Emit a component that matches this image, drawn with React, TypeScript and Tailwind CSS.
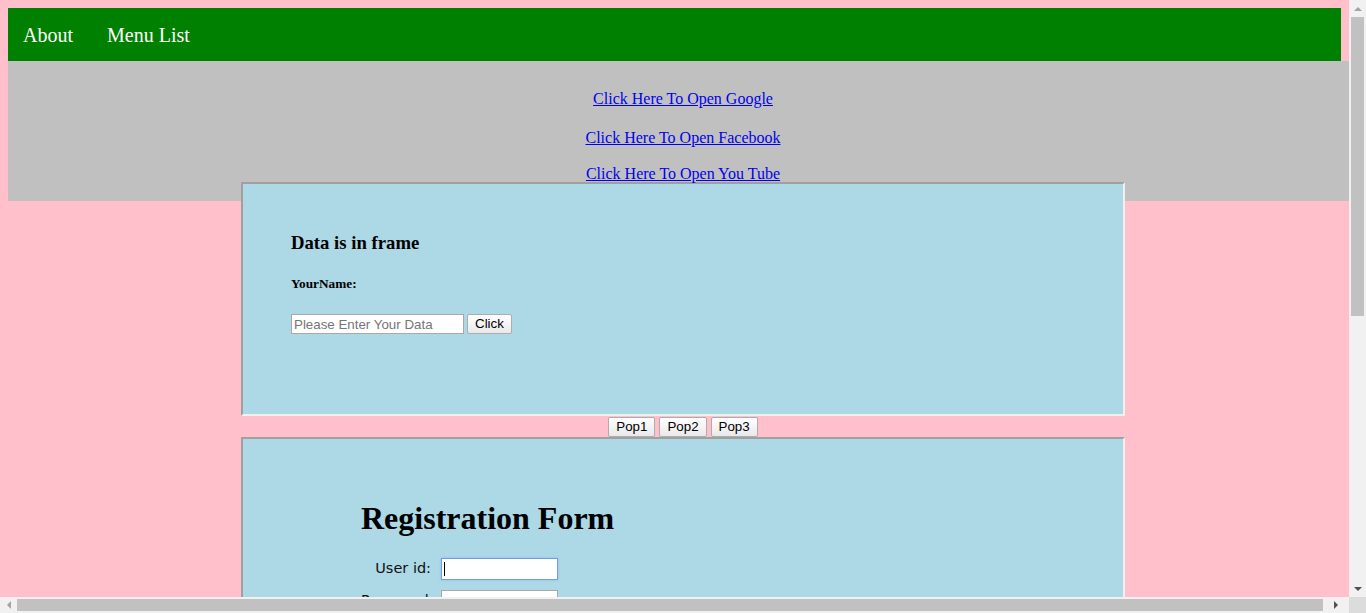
const serif = 'font-["Liberation_Serif",serif]'

const links = [
  { label: 'Click Here To Open Google', gap: 'mt-0 leading-[18px]' },
  { label: 'Click Here To Open Facebook', gap: 'mt-[21px] leading-[18px]' },
  { label: 'Click Here To Open You Tube', gap: 'mt-[19px] leading-[16px]' },
]

function OldButton({ label }: { label: string }) {
  return (
    <button className='h-[20px] px-[7px] border border-[#adadad] rounded-[2px] bg-linear-to-b from-white to-[#e9e9e9] text-[13.33px] leading-none text-black font-["Liberation_Sans",Arial,sans-serif]'>
      {label}
    </button>
  )
}

function Frame({ className, children }: { className: string; children: React.ReactNode }) {
  return (
    <div
      className={`mx-auto w-[884px] shrink-0 border-2 border-t-[#a0a0a0] border-l-[#a0a0a0] border-b-[#f0f0f0] border-r-[#f0f0f0] bg-[#add8e6] text-left ${className}`}
    >
      {children}
    </div>
  )
}

function Arrow({ dir, color }: { dir: 'up' | 'down' | 'left' | 'right'; color: string }) {
  const pts = {
    up: '0,4 4,0 8,4',
    down: '0,0 8,0 4,4',
    left: '4,0 4,8 0,4',
    right: '0,0 0,8 4,4',
  }[dir]
  const w = dir === 'up' || dir === 'down' ? 8 : 4
  const h = dir === 'up' || dir === 'down' ? 4 : 8
  return (
    <svg width={w} height={h} viewBox={`0 0 ${w} ${h}`}>
      <polygon points={pts} fill={color} />
    </svg>
  )
}

function Page() {
  return (
    <div className={`pt-[8px] pl-[8px] ${serif}`}>
      <nav className="w-[1333px] h-[53px] bg-[#008000] flex items-center gap-[4px] text-white text-[20px]">
        <a className="px-[15px]">About</a>
        <a className="px-[15px]">Menu List</a>
      </nav>
      <div className="w-[1350px] h-[140px] bg-[#c0c0c0] text-center pt-[29px]">
        {links.map((l) => (
          <div key={l.label} className={`${l.gap} text-[16px]`}>
            <a className="text-[#0000ee] underline">{l.label}</a>
          </div>
        ))}

        <Frame className="h-[234px] pt-[48px] pl-[48px]">
          <h3 className="text-[18.72px] font-bold leading-[22px]">Data is in frame</h3>
          <h5 className="mt-[22px] text-[13.28px] font-bold leading-[15px]">YourName:</h5>
          <div className="mt-[23px] flex gap-[3px]">
            <input
              placeholder="Please Enter Your Data"
              className='w-[173px] h-[20px] px-[2px] bg-white border border-[#a9a9a9] text-[13.33px] placeholder:text-[#757575] font-["Liberation_Sans",Arial,sans-serif] outline-none'
            />
            <OldButton label="Click" />
          </div>
        </Frame>

        <div className="flex justify-center gap-[4px] h-[21px] pt-[1px]">
          <OldButton label="Pop1" />
          <OldButton label="Pop2" />
          <OldButton label="Pop3" />
        </div>

        <Frame className="h-[320px] pt-[61px] pl-[118px]">
          <h1 className="text-[32px] font-bold leading-[37px]">Registration Form</h1>
          <div className='mt-[21px] flex flex-col gap-[10px] text-[14.5px] text-[#111] font-["DejaVu_Sans",Verdana,sans-serif]'>
            <div className="flex items-center">
              <label className="w-[70px] text-right">User id:</label>
              <div className="ml-[10px] w-[117px] h-[22px] bg-white border border-[#6fa0e6] shadow-[0_0_2px_#8fb8f0] flex items-center pl-[2px]">
                <span className="w-px h-[14px] bg-black" />
              </div>
            </div>
            <div className="flex items-center">
              <label className="w-[70px] text-right">Password:</label>
              <div className="ml-[10px] w-[117px] h-[22px] bg-white border border-[#a9a9a9]" />
            </div>
          </div>
        </Frame>
      </div>
    </div>
  )
}

export default function App() {
  return (
    <div className="w-[1366px] h-[613px] flex flex-col overflow-hidden bg-[#f1f1f1]">
      <div className="flex h-[597px]">
        <div className="w-[1349px] h-[597px] overflow-hidden bg-[#ffc0cb]">
          <Page />
        </div>
        <div className="w-[17px] h-[597px] bg-[#f1f1f1] flex flex-col items-center">
          <div className="h-[17px] flex items-center justify-center">
            <Arrow dir="up" color="#a3a3a3" />
          </div>
          <div className="w-[13px] h-[299px] bg-[#c1c1c1]" />
          <div className="flex-1" />
          <div className="h-[17px] flex items-center justify-center">
            <Arrow dir="down" color="#505050" />
          </div>
        </div>
      </div>
      <div className="flex h-[16px]">
        <div className="w-[1349px] flex items-center">
          <div className="w-[17px] flex items-center justify-center">
            <Arrow dir="left" color="#a3a3a3" />
          </div>
          <div className="w-[1306px] h-[12px] bg-[#c1c1c1]" />
          <div className="flex-1 flex items-center justify-center">
            <Arrow dir="right" color="#505050" />
          </div>
        </div>
        <div className="w-[17px] bg-[#dcdcdc]" />
      </div>
    </div>
  )
}
